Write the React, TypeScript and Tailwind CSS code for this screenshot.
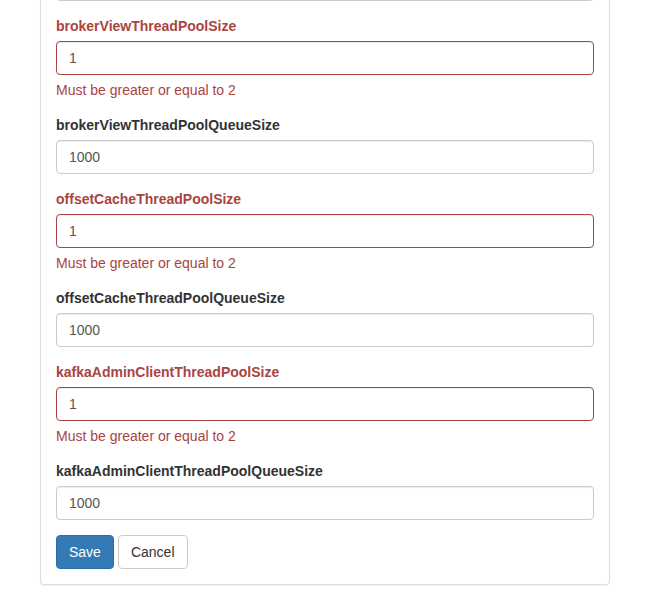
import React, { useState } from 'react'

interface Field {
  name: string
  value: string
  error?: string
}

const initialFields: Field[] = [
  { name: 'brokerViewThreadPoolSize', value: '1', error: 'Must be greater or equal to 2' },
  { name: 'brokerViewThreadPoolQueueSize', value: '1000' },
  { name: 'offsetCacheThreadPoolSize', value: '1', error: 'Must be greater or equal to 2' },
  { name: 'offsetCacheThreadPoolQueueSize', value: '1000' },
  { name: 'kafkaAdminClientThreadPoolSize', value: '1', error: 'Must be greater or equal to 2' },
  { name: 'kafkaAdminClientThreadPoolQueueSize', value: '1000' },
]

const inputBase =
  'block w-full h-[34px] px-3 py-1.5 text-[14px] text-[#555] bg-white rounded-[4px] border outline-none shadow-[inset_0_1px_1px_rgba(0,0,0,0.075)]'

const FormGroup: React.FC<{
  field: Field
  onChange: (value: string) => void
}> = ({ field, onChange }) => {
  const hasError = !!field.error
  return (
    <div className="mb-[15px]">
      <label
        htmlFor={field.name}
        className={`block mb-[5px] text-[14px] leading-5 font-bold ${
          hasError ? 'text-[#a94442]' : 'text-[#333]'
        }`}
      >
        {field.name}
      </label>
      <input
        id={field.name}
        type="text"
        value={field.value}
        onChange={(e) => onChange(e.target.value)}
        className={`${inputBase} ${hasError ? 'border-[#a94442]' : 'border-[#ccc]'}`}
      />
      {hasError && (
        <span className="block mt-[5px] mb-[15px] text-[14px] leading-5 text-[#a94442]">
          {field.error}
        </span>
      )}
    </div>
  )
}

export default function App() {
  const [fields, setFields] = useState<Field[]>(initialFields)

  const update = (idx: number, value: string) => {
    setFields((prev) => prev.map((f, i) => (i === idx ? { ...f, value } : f)))
  }

  return (
    <div
      className="h-[595px] w-[654px] overflow-hidden bg-white"
      style={{ fontFamily: '"Liberation Sans", Arial, sans-serif' }}
    >
      <div className="-mt-[49px] ml-[40px] w-[570px] border border-[#ddd] rounded-[4px] bg-white shadow-[0_1px_1px_rgba(0,0,0,0.05)]">
        <div className="p-[15px]">
          {/* previous group, scrolled mostly out of view */}
          <div className="mb-[15px]">
            <input
              type="text"
              defaultValue=""
              className={`${inputBase} border-[#ccc]`}
            />
          </div>

          {fields.map((f, i) => (
            <FormGroup key={f.name} field={f} onChange={(v) => update(i, v)} />
          ))}

          <div className="flex gap-[4px]">
            <button
              type="submit"
              className="h-[34px] px-3 text-[14px] text-white bg-[#337ab7] border border-[#2e6da4] rounded-[4px]"
            >
              Save
            </button>
            <button
              type="button"
              className="h-[34px] px-3 text-[14px] text-[#333] bg-white border border-[#ccc] rounded-[4px]"
            >
              Cancel
            </button>
          </div>
        </div>
      </div>
    </div>
  )
}
